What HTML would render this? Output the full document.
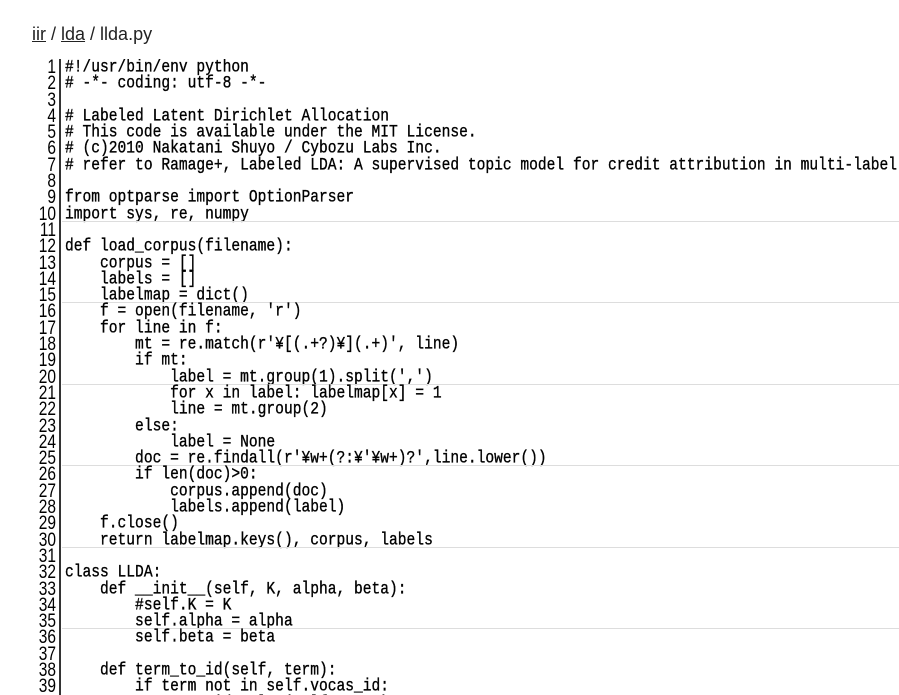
<!DOCTYPE html>
<html><head><meta charset="utf-8"><style>
body{margin:0;background:#fff;width:899px;height:695px;overflow:hidden;position:relative}
.bc{position:absolute;left:32px;top:24px;font:18px "Liberation Sans",sans-serif;color:#222}
.bc a{color:#222;text-decoration:underline}
.code{position:absolute;left:0;top:59px;width:899px;height:636px;overflow:hidden;font-family:"Liberation Mono","Noto Sans CJK JP",monospace;font-size:14.6px;color:#000}
.l{height:16.3px;line-height:16.3px;position:relative}
.n{position:absolute;left:0;top:0;text-align:right;border-right:2px solid #333;padding-right:3px;box-sizing:border-box;width:61px;height:16.3px}
.n i{font-style:normal;display:inline-block;transform:scaleY(1.25) translateY(1px);font-size:15.5px;font-family:"Liberation Sans",sans-serif}
.t{position:absolute;left:65px;top:1px;white-space:pre;display:inline-block;transform:scaleY(1.2);transform-origin:0 55%;-webkit-text-stroke:0.3px #000}
.s::after{content:"";position:absolute;left:62px;right:0;bottom:0;height:1px;background:#ddd}
</style></head><body>
<div class="bc"><a>iir</a> / <a>lda</a> / llda.py</div>
<div class="code"><div class="l"><span class="n"><i>1</i></span><span class="t">#!/usr/bin/env python</span></div><div class="l"><span class="n"><i>2</i></span><span class="t"># -*- coding: utf-8 -*-</span></div><div class="l"><span class="n"><i>3</i></span></div><div class="l"><span class="n"><i>4</i></span><span class="t"># Labeled Latent Dirichlet Allocation</span></div><div class="l"><span class="n"><i>5</i></span><span class="t"># This code is available under the MIT License.</span></div><div class="l"><span class="n"><i>6</i></span><span class="t"># (c)2010 Nakatani Shuyo / Cybozu Labs Inc.</span></div><div class="l"><span class="n"><i>7</i></span><span class="t"># refer to Ramage+, Labeled LDA: A supervised topic model for credit attribution in multi-label</span></div><div class="l"><span class="n"><i>8</i></span></div><div class="l"><span class="n"><i>9</i></span><span class="t">from optparse import OptionParser</span></div><div class="l s"><span class="n"><i>10</i></span><span class="t">import sys, re, numpy</span></div><div class="l"><span class="n"><i>11</i></span></div><div class="l"><span class="n"><i>12</i></span><span class="t">def load_corpus(filename):</span></div><div class="l"><span class="n"><i>13</i></span><span class="t">    corpus = []</span></div><div class="l"><span class="n"><i>14</i></span><span class="t">    labels = []</span></div><div class="l s"><span class="n"><i>15</i></span><span class="t">    labelmap = dict()</span></div><div class="l"><span class="n"><i>16</i></span><span class="t">    f = open(filename, 'r')</span></div><div class="l"><span class="n"><i>17</i></span><span class="t">    for line in f:</span></div><div class="l"><span class="n"><i>18</i></span><span class="t">        mt = re.match(r'¥[(.+?)¥](.+)', line)</span></div><div class="l"><span class="n"><i>19</i></span><span class="t">        if mt:</span></div><div class="l s"><span class="n"><i>20</i></span><span class="t">            label = mt.group(1).split(',')</span></div><div class="l"><span class="n"><i>21</i></span><span class="t">            for x in label: labelmap[x] = 1</span></div><div class="l"><span class="n"><i>22</i></span><span class="t">            line = mt.group(2)</span></div><div class="l"><span class="n"><i>23</i></span><span class="t">        else:</span></div><div class="l"><span class="n"><i>24</i></span><span class="t">            label = None</span></div><div class="l s"><span class="n"><i>25</i></span><span class="t">        doc = re.findall(r'¥w+(?:¥'¥w+)?',line.lower())</span></div><div class="l"><span class="n"><i>26</i></span><span class="t">        if len(doc)&gt;0:</span></div><div class="l"><span class="n"><i>27</i></span><span class="t">            corpus.append(doc)</span></div><div class="l"><span class="n"><i>28</i></span><span class="t">            labels.append(label)</span></div><div class="l"><span class="n"><i>29</i></span><span class="t">    f.close()</span></div><div class="l s"><span class="n"><i>30</i></span><span class="t">    return labelmap.keys(), corpus, labels</span></div><div class="l"><span class="n"><i>31</i></span></div><div class="l"><span class="n"><i>32</i></span><span class="t">class LLDA:</span></div><div class="l"><span class="n"><i>33</i></span><span class="t">    def __init__(self, K, alpha, beta):</span></div><div class="l"><span class="n"><i>34</i></span><span class="t">        #self.K = K</span></div><div class="l s"><span class="n"><i>35</i></span><span class="t">        self.alpha = alpha</span></div><div class="l"><span class="n"><i>36</i></span><span class="t">        self.beta = beta</span></div><div class="l"><span class="n"><i>37</i></span></div><div class="l"><span class="n"><i>38</i></span><span class="t">    def term_to_id(self, term):</span></div><div class="l"><span class="n"><i>39</i></span><span class="t">        if term not in self.vocas_id:</span></div><div class="l"><span class="n"><i>40</i></span><span class="t">            voca_id = len(self.vocas)</span></div></div>
</body></html>
